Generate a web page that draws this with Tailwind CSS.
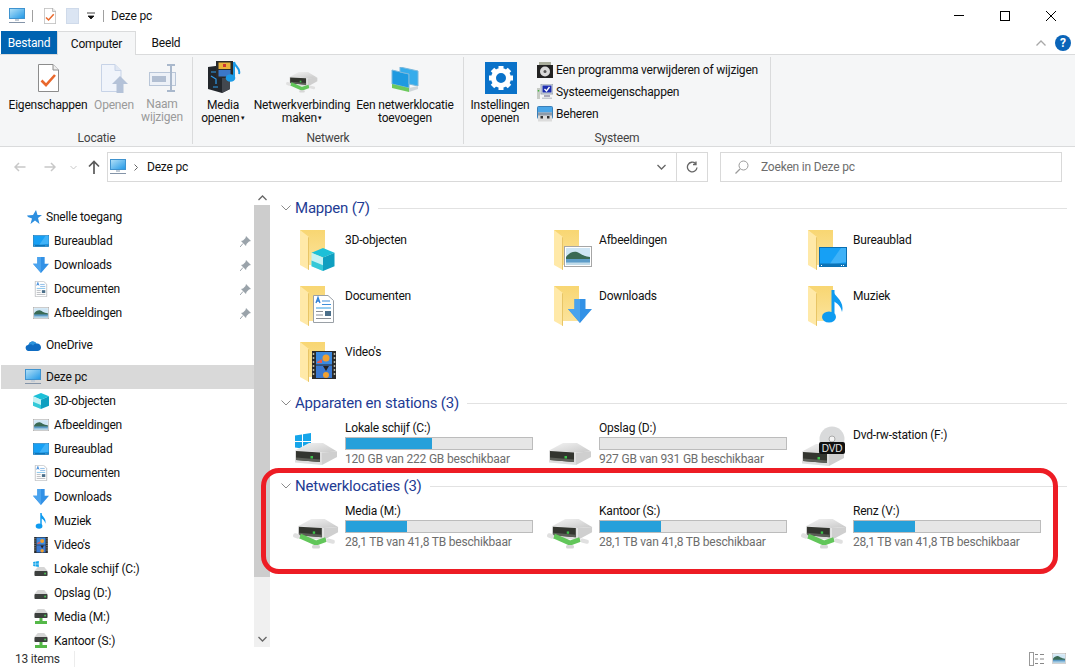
<!DOCTYPE html>
<html lang="nl">
<head>
<meta charset="utf-8">
<title>Deze pc</title>
<script src="https://cdn.jsdelivr.net/npm/@tailwindcss/browser@4"></script>
</head>
<body class="bg-white">
<svg class="absolute w-0 h-0" aria-hidden="true">
<defs>
<linearGradient id="gs" x1="0" y1="0" x2="1" y2="1"><stop offset="0" stop-color="#b5e2f8"/><stop offset="1" stop-color="#1f97e6"/></linearGradient>
<linearGradient id="gf" x1="0" y1="0" x2="0" y2="1"><stop offset="0" stop-color="#f8d672"/><stop offset="1" stop-color="#fbe39b"/></linearGradient>
<linearGradient id="gtop" x1="0" y1="0" x2="1" y2="1"><stop offset="0" stop-color="#f4f4f4"/><stop offset="1" stop-color="#c8c8c8"/></linearGradient>
<symbol id="pc" viewBox="0 0 16 16"><rect x=".5" y=".5" width="15" height="10" fill="url(#gs)" stroke="#3f93cf"/><rect x="6" y="11" width="4" height="2" fill="#c3ccd6"/><rect x="0" y="14" width="16" height="1" fill="#8494a8"/></symbol>
<symbol id="doccheck" viewBox="0 0 21 28"><path d="M.5.5H15l5.500 5.500v21.500H.5z" fill="#fff" stroke="#8c8c8c"/><path d="M15 .5V6h5.500" fill="#eee" stroke="#8c8c8c"/><path d="M3.500 16.500l4.500 4.500 9-10" fill="none" stroke="#e9682c" stroke-width="2.600"/></symbol>
<symbol id="docopen" viewBox="0 0 28 30"><path d="M.5.5H14l6 6v21H.5z" fill="#f0f4fb" stroke="#c7d3e7"/><path d="M14 .5v6h6" fill="#dfe6f2" stroke="#c7d3e7"/><path d="M19 12l8 8h-4.500v9h-7v-9H11z" fill="#b4c2d8"/></symbol>
<symbol id="rename" viewBox="0 0 28 28"><rect x=".5" y="8.500" width="26" height="13" fill="#edf1f7" stroke="#b9c6d8"/><rect x="3" y="12" width="14" height="6" fill="#b2bfd2"/><path d="M18 1h4v26h-4M26 1h-4M26 27h-4" fill="none" stroke="#a9b8cc" stroke-width="2"/></symbol>
<symbol id="media" viewBox="0 0 34 32"><path d="M1 6l15-2 7 4v20l-8 4L1 28z" fill="#22262b"/><path d="M15 10l8-2v20l-8 4z" fill="#43484f"/><path d="M4 11h7M4 15l5 3v5M6 26h5" fill="none" stroke="#2f9bea" stroke-width="1.200"/><rect x="9" y="0" width="17" height="17" fill="#2a2a2a"/><rect x="11.500" y="1.500" width="12" height="6.500" fill="#e9b23a"/><rect x="11.500" y="9" width="12" height="6.500" fill="#3b78c8"/><rect x="16" y="3" width="3" height="3" fill="#c33"/><path d="M27 1v15.500" stroke="#1c9be6" stroke-width="2"/><path d="M27 1c1 5 7 6 5 12" fill="none" stroke="#1c9be6" stroke-width="2"/><ellipse cx="23.500" cy="17" rx="4.800" ry="3.800" fill="#1c9be6"/></symbol>
<symbol id="drive" viewBox="0 0 42 22"><path d="M0 7.500L14 0h14l14 8.500-15 1z" fill="url(#gtop)"/><path d="M27 9.500l15-1V14l-15 8z" fill="#cfcfcf"/><path d="M0 7.500l27 2V22L0 19.500z" fill="#dedede"/><path d="M1 8l24 1.500V19L1 17z" fill="#33352f"/><path d="M1 14.500l24 2V19L1 17z" fill="#5c5f58"/><rect x="15.500" y="13" width="2.500" height="2.500" fill="#3cc24a"/></symbol>
<symbol id="sdrive" viewBox="0 0 16 11"><path d="M0 5L4 0h8l4 5z" fill="#d6d6d6"/><rect x="0" y="5" width="16" height="6" rx="1" fill="#3d403e"/><rect x="12" y="7" width="2" height="2" fill="#4ed05a"/></symbol>
<symbol id="netdrive" viewBox="0 0 46 30"><use href="#drive" x="4" y="0" width="42" height="21"/><path d="M7 17l16 7 10-3.500" fill="none" stroke="#62c65a" stroke-width="5"/><rect x="0" y="14.500" width="7" height="4.500" rx="2" fill="#e0e0e0" transform="rotate(20 3 17)"/><rect x="33" y="20" width="9" height="4" rx="2" fill="#e0e0e0" transform="rotate(15 37 22)"/><rect x="19" y="26" width="8" height="3.500" rx="1.500" fill="#d6d6d6"/></symbol>
<symbol id="snet" viewBox="0 0 16 16"><use href="#sdrive" x="1" y="0" width="14" height="9"/><rect x="6.500" y="9" width="3" height="3" fill="#55b848"/><rect x="2" y="12" width="12" height="3" fill="#55b848"/></symbol>
<symbol id="netloc" viewBox="0 0 28 26"><path d="M1 3l17 4v14L1 17z" fill="#1e9ae0" stroke="#7ab8dc"/><path d="M9 0l18 4v15l-9-2V7L9 5z" fill="#36aceb" stroke="#7ab8dc"/><path d="M1 17l17 4v4L1 21z" fill="#6cc95c"/><path d="M18 21l9-2v3l-9 3z" fill="#cfd6da"/></symbol>
<symbol id="gear" viewBox="0 0 32 32"><rect width="32" height="32" fill="#0a72c9"/><circle cx="16" cy="16" r="7.500" fill="none" stroke="#fff" stroke-width="5"/><g fill="#fff"><rect x="13.500" y="4" width="5" height="5"/><rect x="13.500" y="23" width="5" height="5"/><rect x="4" y="13.500" width="5" height="5"/><rect x="23" y="13.500" width="5" height="5"/><rect x="13.500" y="4" width="5" height="5" transform="rotate(45 16 16)"/><rect x="13.500" y="23" width="5" height="5" transform="rotate(45 16 16)"/><rect x="4" y="13.500" width="5" height="5" transform="rotate(45 16 16)"/><rect x="23" y="13.500" width="5" height="5" transform="rotate(45 16 16)"/></g></symbol>
<symbol id="uninst" viewBox="0 0 16 16"><rect x="2" y="0" width="12" height="4" fill="#a9ad9c"/><rect x="0" y="3" width="16" height="13" fill="#222"/><circle cx="8" cy="9.500" r="5" fill="#d9d9d9"/><circle cx="8" cy="9.500" r="1.500" fill="#555"/></symbol>
<symbol id="sys" viewBox="0 0 16 16"><rect x="4" y="0" width="12" height="10" fill="#d8dde2" stroke="#8a98a8" stroke-width=".8"/><rect x="5.500" y="1.500" width="9" height="7" fill="#1d2fb0"/><path d="M7.500 5l2 2 3-4" fill="none" stroke="#fff" stroke-width="1.300"/><rect x="0" y="4" width="3" height="11" fill="#c7cbc5"/><rect x=".8" y="6" width="1.400" height="1.500" fill="#41b63e"/><rect x="7" y="11" width="6" height="2" fill="#aab"/><rect x="5" y="13.500" width="10" height="1.500" fill="#c5c9cf"/></symbol>
<symbol id="manage" viewBox="0 0 16 16"><rect x=".5" y=".5" width="15" height="12" rx="1" fill="#4aa6e8" stroke="#3a7fb8"/><rect x="1" y="6.500" width="14" height="9" fill="#dcdcdc"/><rect x="1" y="6.500" width="14" height="3" fill="#8d9aa8"/><rect x="3.500" y="10" width="2.500" height="2.500" fill="#333"/><rect x="10" y="10" width="2.500" height="2.500" fill="#333"/></symbol>
<symbol id="star" viewBox="0 0 15 15"><path d="M9 0l1.500 5H15l-4 3 1.500 6L8 10.500 3.500 14 5 8.500 1 7l-1-1.500 6-.5z" fill="#2d8fe0"/></symbol>
<symbol id="desk" viewBox="0 0 28 20"><rect x=".5" y=".5" width="27" height="19" fill="#16a0f5" stroke="#0b6eb0"/><path d="M10 18L22 1h5v14z" fill="#3fb2f8"/><rect x="1" y="16.500" width="26" height="3" fill="#0c74b8"/><rect x="2" y="18" width="1" height="1" fill="#fff"/><rect x="22" y="18" width="1" height="1" fill="#fff"/><rect x="24" y="18" width="1" height="1" fill="#fff"/></symbol>
<symbol id="down" viewBox="0 0 24 24"><path d="M6.500 0h11v10H24L12 24 0 10h6.500z" fill="#3291e6"/><path d="M6.500 0h5.500v24L0 10h6.500z" fill="#4aa3ee"/></symbol>
<symbol id="doc" viewBox="0 0 21 28"><path d="M.5.5H15l5.500 5v22H.5z" fill="#fff" stroke="#9aa0a6"/><path d="M3 8l2-5.500L7 8M3.500 6h3" fill="none" stroke="#2d7fd6" stroke-width="1.300"/><path d="M9 6h8M9 9.500h9" stroke="#3f8fd8"/><path d="M3 13h15" stroke="#2f9be0"/><path d="M3 16.500h7M3 20h7M3 23.500h15" stroke="#8a8f96"/><rect x="12" y="16" width="6" height="5" fill="#4b6f8a"/></symbol>
<symbol id="pic" viewBox="0 0 28 21"><rect x=".5" y=".5" width="27" height="20" fill="#fff" stroke="#a6a6a6"/><rect x="2" y="2" width="24" height="17" fill="#cfe6f5"/><path d="M2 11c3-4 7-6 11-5 3 1 5 4 13 5v3H2z" fill="#3a6a55"/><rect x="2" y="13" width="24" height="6" fill="#5d9cc8"/><rect x="2" y="16.500" width="24" height="2.500" fill="#c2dcea"/></symbol>
<symbol id="cloud" viewBox="0 0 16 11"><path d="M4 11a3 3 0 0 1-.7-6A4.500 4.500 0 0 1 11.500 3.500 3.800 3.800 0 0 1 16 7.500c0 2-1.500 3.500-3.500 3.500z" fill="#0f6cc2"/><path d="M3.300 5A4.500 4.500 0 0 1 11.500 3.500 4 4 0 0 0 8 5.500 3.500 3.500 0 0 0 3.300 5z" fill="#2b93dc"/></symbol>
<symbol id="cube" viewBox="0 0 24 24"><path d="M12 0l12 5-12 5L0 5z" fill="#1cc0d8"/><path d="M0 5l12 5v14L0 19z" fill="#c4f2f4"/><path d="M24 5L12 10v14l12-5z" fill="#0f9fc0"/><path d="M0 13l12 5v6L0 19z" fill="#34c9d8"/></symbol>
<symbol id="note" viewBox="0 0 22 33"><path d="M11 0v26" stroke="#0e9bf0" stroke-width="3"/><path d="M11 0c1 7 12 10 9 22-1-6-5-9-9-11z" fill="#0e9bf0"/><ellipse cx="7" cy="27" rx="7" ry="5.500" fill="#0e9bf0"/></symbol>
<symbol id="film" viewBox="0 0 24 28"><rect width="24" height="28" fill="#2a2a2a"/><path d="M1.500 2v24M22.500 2v24" stroke="#b9b9a8" stroke-width="1.500" stroke-dasharray="2 2"/><rect x="4" y="1" width="16" height="12.500" fill="#3c8ae0"/><rect x="4" y="14.500" width="16" height="12.500" fill="#3a78d0"/><circle cx="14" cy="7" r="3.500" fill="#f0a030"/><path d="M5 11l5-3v4H5z" fill="#e85a50"/><circle cx="14" cy="24" r="3" fill="#f0a030"/><path d="M11 15h6l-3 5z" fill="#222"/></symbol>
<symbol id="win" viewBox="0 0 16 17"><path d="M0 2.500L7 1.500V8H0zM8 1.300L16 0v8H8zM0 9h7v6.500L0 14.500zM8 9h8v8l-8-1.300z" fill="#15a5ea"/></symbol>
<symbol id="dvd" viewBox="0 0 44 40"><circle cx="30" cy="13" r="12.500" fill="#d9dadb"/><circle cx="30" cy="13" r="3" fill="#f4f4f4" stroke="#aaa"/><use href="#drive" x="0" y="18" width="42" height="22"/><rect x="17" y="16" width="26" height="12" rx="2" fill="#111"/><text x="30" y="26" font-size="10" fill="#e6e6e6" text-anchor="middle" font-family="Liberation Sans">DVD</text></symbol>
<symbol id="pin" viewBox="0 0 11 11"><path d="M6 0l5 5-2 .5-2.500 2.500L6 10 1 5l2-.5L5.500 2z" fill="#9aa3aa"/><path d="M3 7.500L0 11" stroke="#9aa3aa"/></symbol>
<symbol id="folder" viewBox="0 0 36 40"><path d="M0 0h25v35H0z" fill="url(#gf)"/><path d="M0 0l9 7v33L0 35z" fill="#ffe9a8"/><path d="M9 7v33l-1-.6V7.500z" fill="#e8c566"/></symbol>
</defs>
</svg>

<div class="relative w-[1075px] h-[671px] overflow-hidden bg-white text-[12px] leading-4 tracking-[-0.2px] text-[#111] font-['Roboto',sans-serif]">

<!-- title bar -->
<header class="h-[31px] flex items-center pl-[9px]">
  <svg class="w-4 h-4"><use href="#pc"/></svg>
  <span class="ml-[7px] w-px h-3 bg-[#a0a0a0]"></span>
  <svg class="ml-[11px] w-3 h-4"><use href="#doccheck"/></svg>
  <span class="ml-2.5 w-[13px] h-4 bg-[#dbe5f3] border border-[#cfdaea]"></span>
  <svg class="ml-[8px] w-2 h-2" viewBox="0 0 8 8"><path d="M0 1h8M1 4h6l-3 3z" fill="#111" stroke="#111" stroke-width=".8"/></svg>
  <span class="ml-2 w-px h-3 bg-[#a0a0a0]"></span>
  <span class="ml-[7px]">Deze pc</span>
  <div class="ml-auto flex items-center pr-[1px]">
    <span class="w-[46px] flex justify-center"><span class="w-2.5 h-px bg-black"></span></span>
    <span class="w-[46px] flex justify-center"><span class="w-2.5 h-2.5 border border-black"></span></span>
    <span class="w-[46px] flex justify-center"><svg class="w-2.5 h-2.5" viewBox="0 0 10 10"><path d="M0 0l10 10M10 0L0 10" stroke="#000"/></svg></span>
  </div>
</header>

<!-- tabs -->
<nav class="h-[23px] flex items-stretch pl-px relative z-10">
  <span class="w-[56px] bg-[#0063b1] text-white flex items-center justify-center">Bestand</span>
  <span class="w-[79px] h-[24px] bg-[#f5f6f7] border border-[#dadbdc] border-b-0 flex items-center justify-center">Computer</span>
  <span class="w-[60px] flex items-center justify-center">Beeld</span>
  <div class="ml-auto flex items-center pr-1">
    <svg class="w-2.5 h-1.5 mr-[9px]" viewBox="0 0 10 6"><path d="M.5 5.500L5 1l4.500 4.500" fill="none" stroke="#a8a8a8" stroke-width="1.300"/></svg>
    <span class="w-4 h-4 rounded-full bg-[#0a64b8] text-white font-bold text-[12px] flex items-center justify-center">?</span>
  </div>
</nav>

<!-- ribbon -->
<section class="h-[93px] bg-[#f5f6f7] border-t border-b border-[#dadbdc] flex pl-px whitespace-nowrap">
  <div class="w-[192px] my-[2px] border-r border-[#dadbdc] flex flex-col">
    <div class="h-[70px] flex pl-[5px]">
      <div class="w-[84px] flex flex-col items-center text-center"><svg class="mt-[7px] h-7 w-[21px] shrink-0"><use href="#doccheck"/></svg><span class="mt-[5px]">Eigenschappen</span></div>
      <div class="w-[48px] flex flex-col items-center text-center text-[#9a9a9a]"><svg class="mt-[7px] ml-[2px] h-[30px] w-7 shrink-0"><use href="#docopen"/></svg><span class="mt-[3px]">Openen</span></div>
      <div class="w-[48px] flex flex-col items-center text-center text-[#9a9a9a] leading-[13px]"><svg class="mt-[7px] ml-[2px] h-7 w-7 shrink-0"><use href="#rename"/></svg><span class="mt-[6px]">Naam<br>wijzigen</span></div>
    </div>
    <div class="mt-auto text-center text-[#444] -mb-[2px]">Locatie</div>
  </div>
  <div class="w-[271px] my-[2px] border-r border-[#dadbdc] flex flex-col">
    <div class="h-[70px] flex pl-[5px] leading-[13px] text-center">
      <div class="w-[50px] flex flex-col items-center"><svg class="mt-1 ml-[2px] h-8 w-[34px] shrink-0"><use href="#media"/></svg><span class="mt-[6px]">Media<br>openen<span class="text-[7px] align-middle"> ▾</span></span></div>
      <div class="w-[108px] flex flex-col items-center"><svg class="mt-[15px] h-[21px] w-8 shrink-0"><use href="#netdrive"/></svg><span class="mt-[6px]">Netwerkverbinding<br>maken<span class="text-[7px] align-middle"> ▾</span></span></div>
      <div class="w-[98px] flex flex-col items-center"><svg class="mt-[10px] h-[26px] w-7 shrink-0"><use href="#netloc"/></svg><span class="mt-[6px]">Een netwerklocatie<br>toevoegen</span></div>
    </div>
    <div class="mt-auto text-center text-[#444] -mb-[2px]">Netwerk</div>
  </div>
  <div class="w-[307px] my-[2px] border-r border-[#dadbdc] flex flex-col">
    <div class="h-[70px] flex pl-[2px]">
      <div class="w-[68px] flex flex-col items-center text-center leading-[13px]"><svg class="mt-[5px] ml-px w-8 h-8 shrink-0"><use href="#gear"/></svg><span class="mt-[5px]">Instellingen<br>openen</span></div>
      <div class="pl-[3px] pt-[2px] flex flex-col">
        <div class="h-[22px] flex items-center gap-[3px]"><svg class="w-4 h-4"><use href="#uninst"/></svg>Een programma verwijderen of wijzigen</div>
        <div class="h-[22px] flex items-center gap-[3px]"><svg class="w-4 h-4"><use href="#sys"/></svg>Systeemeigenschappen</div>
        <div class="h-[22px] flex items-center gap-[3px]"><svg class="w-4 h-4"><use href="#manage"/></svg>Beheren</div>
      </div>
    </div>
    <div class="mt-auto text-center text-[#444] -mb-[2px]">Systeem</div>
  </div>
</section>

<!-- address row -->
<section class="h-[43px] flex items-start pt-[5px]">
  <div class="w-[107px] h-[30px] flex items-center pl-[14px]">
    <svg class="w-3 h-3" viewBox="0 0 12 12"><path d="M11.500 6H1M5 2L1 6l4 4" fill="none" stroke="#c8c8c8" stroke-width="1.500"/></svg>
    <svg class="ml-[18px] w-3 h-3" viewBox="0 0 12 12"><path d="M.5 6H11M7 2l4 4-4 4" fill="none" stroke="#c8c8c8" stroke-width="1.500"/></svg>
    <svg class="ml-[14px] w-[7px] h-[5px]" viewBox="0 0 7 5"><path d="M.5 1l3 3 3-3" fill="none" stroke="#c8c8c8"/></svg>
    <svg class="ml-[11px] w-3 h-3.5" viewBox="0 0 12 14"><path d="M6 14V1.500M1 6.500l5-5 5 5" fill="none" stroke="#5a5a5a" stroke-width="1.700"/></svg>
  </div>
  <div class="w-[601px] h-[30px] border border-[#d9d9d9] flex items-center">
    <svg class="ml-[2px] w-4 h-4"><use href="#pc"/></svg>
    <svg class="ml-[8px] w-1 h-[7px]" viewBox="0 0 4 7"><path d="M.5.5l3 3-3 3" fill="none" stroke="#666"/></svg>
    <span class="ml-[9px]">Deze pc</span>
    <svg class="ml-auto w-[9px] h-[6px]" viewBox="0 0 9 6"><path d="M.5 1l4 4 4-4" fill="none" stroke="#666" stroke-width="1.300"/></svg>
    <span class="ml-[10px] w-px h-full bg-[#d9d9d9]"></span>
    <svg class="ml-[9px] mr-[9px] w-3 h-3" viewBox="0 0 12 12"><path d="M9.500 2.500A4.800 4.800 0 1 0 11 6.500M10 .5v3H7" fill="none" stroke="#666" stroke-width="1.300"/></svg>
  </div>
  <div class="ml-3 w-[342px] h-[30px] border border-[#d9d9d9] flex items-center text-[#6d6d6d]">
    <svg class="ml-[14px] w-3.5 h-3.5" viewBox="0 0 14 14"><circle cx="8.500" cy="5.500" r="4.500" fill="none" stroke="#9a9a9a"/><path d="M5 9l-4.500 4.500" stroke="#9a9a9a" stroke-width="1.200"/></svg>
    <span class="ml-[12px]">Zoeken in Deze pc</span>
  </div>
</section>

<!-- main -->
<main class="h-[458px] flex">
  <!-- nav pane -->
  <aside class="w-[254px] pl-px overflow-hidden text-[#111] pt-[15px]">
    <div class="h-6 flex items-center pl-[26px]"><svg class="w-[15px] h-[15px] mr-[4px]"><use href="#star"/></svg>Snelle toegang</div>
    <div class="h-6 flex items-center pl-8"><svg class="w-4 h-3 mr-[5px]"><use href="#desk"/></svg>Bureaublad<svg class="ml-auto mr-[3px] w-[11px] h-[11px]"><use href="#pin"/></svg></div>
    <div class="h-6 flex items-center pl-8"><svg class="w-4 h-4 mr-[5px]"><use href="#down"/></svg>Downloads<svg class="ml-auto mr-[3px] w-[11px] h-[11px]"><use href="#pin"/></svg></div>
    <div class="h-6 flex items-center pl-8"><svg class="w-4 h-4 mr-[5px]"><use href="#doc"/></svg>Documenten<svg class="ml-auto mr-[3px] w-[11px] h-[11px]"><use href="#pin"/></svg></div>
    <div class="h-6 flex items-center pl-8"><svg class="w-4 h-3 mr-[5px]"><use href="#pic"/></svg>Afbeeldingen<svg class="ml-auto mr-[3px] w-[11px] h-[11px]"><use href="#pin"/></svg></div>
    <div class="h-6 mt-2 flex items-center pl-6"><svg class="w-4 h-[11px] mr-[5px]"><use href="#cloud"/></svg>OneDrive</div>
    <div class="h-6 mt-2 flex items-center pl-6 bg-[#d9d9d9]"><svg class="w-4 h-4 mr-[5px]"><use href="#pc"/></svg>Deze pc</div>
    <div class="h-6 flex items-center pl-8"><svg class="w-4 h-4 mr-[5px]"><use href="#cube"/></svg>3D-objecten</div>
    <div class="h-6 flex items-center pl-8"><svg class="w-4 h-3 mr-[5px]"><use href="#pic"/></svg>Afbeeldingen</div>
    <div class="h-6 flex items-center pl-8"><svg class="w-4 h-3 mr-[5px]"><use href="#desk"/></svg>Bureaublad</div>
    <div class="h-6 flex items-center pl-8"><svg class="w-4 h-4 mr-[5px]"><use href="#doc"/></svg>Documenten</div>
    <div class="h-6 flex items-center pl-8"><svg class="w-4 h-4 mr-[5px]"><use href="#down"/></svg>Downloads</div>
    <div class="h-6 flex items-center pl-8"><svg class="w-4 h-4 mr-[5px]"><use href="#note"/></svg>Muziek</div>
    <div class="h-6 flex items-center pl-8"><svg class="w-4 h-4 mr-[5px]"><use href="#film"/></svg>Video's</div>
    <div class="h-6 flex items-center pl-8"><svg class="w-4 h-4 mr-[5px]" viewBox="0 0 16 16"><use href="#win" x="0" y="0" width="6" height="6"/><use href="#sdrive" x="1" y="6" width="14" height="9"/></svg>Lokale schijf (C:)</div>
    <div class="h-6 flex items-center pl-8"><svg class="w-4 h-4 mr-[5px]" viewBox="0 0 16 16"><use href="#sdrive" x="1" y="5" width="14" height="9"/></svg>Opslag (D:)</div>
    <div class="h-6 flex items-center pl-8"><svg class="w-4 h-4 mr-[5px]"><use href="#snet"/></svg>Media (M:)</div>
    <div class="h-6 flex items-center pl-8"><svg class="w-4 h-4 mr-[5px]"><use href="#snet"/></svg>Kantoor (S:)</div>
  </aside>

  <!-- scrollbar -->
  <div class="w-[16px] h-[457px] bg-[#f0f0f0] flex flex-col">
    <div class="h-[15px] flex items-center justify-center bg-white"><svg class="w-[9px] h-[6px]" viewBox="0 0 9 6"><path d="M.5 5l4-4 4 4" fill="none" stroke="#666" stroke-width="1.300"/></svg></div>
    <div class="h-[372px] bg-[#cdcdcd]"></div>
    <div class="mt-auto h-[16px] flex items-center justify-center"><svg class="w-[9px] h-[6px]" viewBox="0 0 9 6"><path d="M.5 1l4 4 4-4" fill="none" stroke="#666" stroke-width="1.300"/></svg></div>
  </div>

  <!-- content -->
  <div class="flex-1 pl-[11px] pr-2 pt-2">
    <div class="h-5 flex items-center">
      <svg class="w-[10px] h-[6px]" viewBox="0 0 10 6"><path d="M.5.5L5 5 9.500.5" fill="none" stroke="#8a8a8a"/></svg>
      <span class="ml-1 text-[15px] text-[#1e3b94]">Mappen (7)</span><span class="ml-2 flex-1 h-px bg-[#e2e2e2]"></span>
    </div>
    <div class="ml-3 grid grid-cols-[254px_254px_254px] auto-rows-[56px] mt-2 -mb-[1px]">
      <div class="flex"><div class="w-[52px] pl-[7px] pt-1"><svg class="w-9 h-[42px]" viewBox="0 0 36 42"><use href="#folder" width="36" height="40"/><use href="#cube" x="11" y="18" width="24" height="23"/></svg></div><span class="pt-1.5">3D-objecten</span></div>
      <div class="flex"><div class="w-[52px] pl-[7px] pt-1"><svg class="w-10 h-[42px]" viewBox="0 0 40 42"><use href="#folder" width="36" height="40"/><use href="#pic" x="10" y="16" width="28" height="21"/></svg></div><span class="pt-1.5">Afbeeldingen</span></div>
      <div class="flex"><div class="w-[52px] pl-[7px] pt-1"><svg class="w-10 h-[42px]" viewBox="0 0 40 42"><use href="#folder" width="36" height="40"/><use href="#desk" x="11" y="17" width="28" height="20"/></svg></div><span class="pt-1.5">Bureaublad</span></div>
      <div class="flex"><div class="w-[52px] pl-[7px] pt-1"><svg class="w-9 h-[42px]" viewBox="0 0 36 42"><use href="#folder" width="36" height="40"/><use href="#doc" x="13" y="9" width="21" height="28"/></svg></div><span class="pt-1.5">Documenten</span></div>
      <div class="flex"><div class="w-[52px] pl-[7px] pt-1"><svg class="w-10 h-[42px]" viewBox="0 0 40 42"><use href="#folder" width="36" height="40"/><use href="#down" x="14" y="13" width="24" height="24"/></svg></div><span class="pt-1.5">Downloads</span></div>
      <div class="flex"><div class="w-[52px] pl-[7px] pt-1"><svg class="w-10 h-[42px]" viewBox="0 0 40 42"><use href="#folder" width="36" height="40"/><use href="#note" x="14" y="4" width="22" height="33"/></svg></div><span class="pt-1.5">Muziek</span></div>
      <div class="flex"><div class="w-[52px] pl-[7px] pt-1"><svg class="w-9 h-[42px]" viewBox="0 0 36 42"><use href="#folder" width="36" height="40"/><use href="#film" x="12" y="9" width="24" height="28"/></svg></div><span class="pt-1.5">Video's</span></div>
    </div>

    <div class="h-5 flex items-center">
      <svg class="w-[10px] h-[6px]" viewBox="0 0 10 6"><path d="M.5.5L5 5 9.500.5" fill="none" stroke="#8a8a8a"/></svg>
      <span class="ml-1 text-[15px] text-[#1e3b94]">Apparaten en stations (3)</span><span class="ml-2 flex-1 h-px bg-[#e2e2e2]"></span>
    </div>
    <div class="ml-3 grid grid-cols-[254px_254px_254px] h-[63px]">
      <div class="flex"><svg class="mt-[17px] w-[52px] h-9 shrink-0" viewBox="0 0 52 36"><use href="#win" x="2" y="3" width="16" height="17"/><use href="#drive" x="2" y="13" width="42" height="22"/></svg>
        <div class="pt-[7px]"><div>Lokale schijf (C:)</div><div class="mt-px w-[188px] h-[13px] border border-[#bcbcbc] bg-[#e6e6e6]"><div class="w-[46%] h-full bg-[#26a0da]"></div></div><div class="mt-px text-[#6d6d6d]">120 GB van 222 GB beschikbaar</div></div></div>
      <div class="flex"><svg class="mt-[17px] w-[52px] h-9 shrink-0" viewBox="0 0 52 36"><use href="#drive" x="2" y="13" width="42" height="22"/></svg>
        <div class="pt-[7px]"><div>Opslag (D:)</div><div class="mt-px w-[188px] h-[13px] border border-[#bcbcbc] bg-[#e6e6e6]"></div><div class="mt-px text-[#6d6d6d]">927 GB van 931 GB beschikbaar</div></div></div>
      <div class="flex"><svg class="mt-[10px] w-[52px] h-[44px] shrink-0" viewBox="0 0 52 44"><use href="#dvd" x="1" y="3" width="44" height="40"/></svg>
        <div class="pt-[14px]"><div>Dvd-rw-station (F:)</div></div></div>
    </div>

    <div class="h-5 flex items-center">
      <svg class="w-[10px] h-[6px]" viewBox="0 0 10 6"><path d="M.5.5L5 5 9.500.5" fill="none" stroke="#8a8a8a"/></svg>
      <span class="ml-1 text-[15px] text-[#1e3b94]">Netwerklocaties (3)</span><span class="ml-2 flex-1 h-px bg-[#e2e2e2]"></span>
    </div>
    <div class="ml-3 grid grid-cols-[254px_254px_254px] h-[63px]">
      <div class="flex"><svg class="mt-[23px] w-[52px] h-[30px] shrink-0" viewBox="0 0 52 30"><use href="#netdrive" width="46" height="30"/></svg>
        <div class="pt-[7px]"><div>Media (M:)</div><div class="mt-px w-[188px] h-[13px] border border-[#bcbcbc] bg-[#e6e6e6]"><div class="w-[33%] h-full bg-[#26a0da]"></div></div><div class="mt-px text-[#6d6d6d]">28,1 TB van 41,8 TB beschikbaar</div></div></div>
      <div class="flex"><svg class="mt-[23px] w-[52px] h-[30px] shrink-0" viewBox="0 0 52 30"><use href="#netdrive" width="46" height="30"/></svg>
        <div class="pt-[7px]"><div>Kantoor (S:)</div><div class="mt-px w-[188px] h-[13px] border border-[#bcbcbc] bg-[#e6e6e6]"><div class="w-[33%] h-full bg-[#26a0da]"></div></div><div class="mt-px text-[#6d6d6d]">28,1 TB van 41,8 TB beschikbaar</div></div></div>
      <div class="flex"><svg class="mt-[23px] w-[52px] h-[30px] shrink-0" viewBox="0 0 52 30"><use href="#netdrive" width="46" height="30"/></svg>
        <div class="pt-[7px]"><div>Renz (V:)</div><div class="mt-px w-[188px] h-[13px] border border-[#bcbcbc] bg-[#e6e6e6]"><div class="w-[33%] h-full bg-[#26a0da]"></div></div><div class="mt-px text-[#6d6d6d]">28,1 TB van 41,8 TB beschikbaar</div></div></div>
    </div>
  </div>
</main>

<!-- status bar -->
<footer class="h-[21px] flex items-center pl-[15px] text-[#333]">
  <span>13 items</span><span class="ml-[14px] w-px h-4 bg-[#ececec]"></span>
  <svg class="ml-auto w-4 h-3.5" viewBox="0 0 16 14"><rect x=".5" y=".5" width="4" height="13" fill="#fff" stroke="#999"/><path d="M6 2.500h3M11 2.500h4M6 7h3M11 7h4M6 11.500h3M11 11.500h4" stroke="#888"/></svg>
  <svg class="ml-[7px] mr-[9px] w-[14px] h-[11px]"><use href="#pic"/></svg>
</footer>

<!-- red annotation -->
<div class="absolute left-[261px] top-[468px] w-[797px] h-[106px] border-[5px] border-[#ed1c24] rounded-[18px]"></div>
</div>
</body>
</html>
